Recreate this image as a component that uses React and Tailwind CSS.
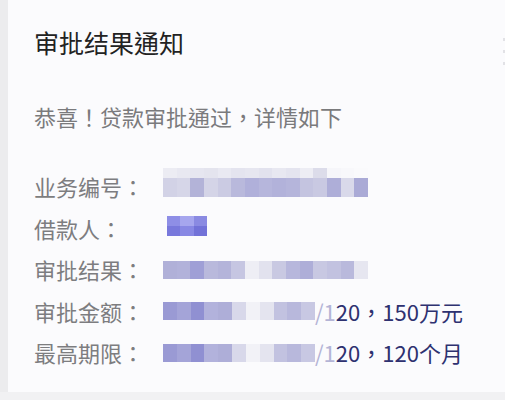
const font = { fontFamily: '"Noto Sans CJK TC", "Noto Sans", sans-serif' };

const rows = [
  { label: '业务编号：', kind: 'id' },
  { label: '借款人：', kind: 'name' },
  { label: '审批结果：', kind: 'result' },
  { label: '审批金额：', kind: 'amount', tail: '，150万元' },
  { label: '最高期限：', kind: 'amount', tail: '，120个月' },
];

const idTop = [
  'bg-[#ececf3]', 'bg-[#e8e8f1]', 'bg-[#e6e6f0]', 'bg-[#e4e4ee]', 'bg-[#e9e9f2]', 'bg-[#e4e4ef]',
  'bg-[#e6e6f0]', 'bg-[#e2e2ee]', 'bg-[#e8e8f1]', 'bg-[#e4e4ef]', 'bg-[#ededf4]', 'bg-[#dcdcea]',
  'bg-[#f6f6fa]', 'bg-[#f8f8fb]', 'bg-[#fafafc]',
];
const idBottom = [
  'bg-[#d2d2e6]', 'bg-[#d6d6e8]', 'bg-[#b3b3d8]', 'bg-[#d4d4e7]', 'bg-[#cbcbe3]', 'bg-[#b9b9dc]',
  'bg-[#b0b0da]', 'bg-[#b6b6dc]', 'bg-[#b2b2da]', 'bg-[#b5b5db]', 'bg-[#c4c4e0]', 'bg-[#c9c9e2]',
  'bg-[#aeaed8]', 'bg-[#d9d9ea]', 'bg-[#aaaad6]',
];
const nameCells = [
  ['bg-[#8e8ee6]', 'bg-[#a6a6ee]', 'bg-[#8a8ae2]'],
  ['bg-[#7878dc]', 'bg-[#8888e4]', 'bg-[#7272d8]'],
];
const resultCells = [
  'bg-[#b0b0d8]', 'bg-[#b2b2da]', 'bg-[#9f9fd6]', 'bg-[#b9b9dc]', 'bg-[#b4b4da]', 'bg-[#c6c6e2]',
  'bg-[#eeeef5]', 'bg-[#e2e2ee]', 'bg-[#c9c9e2]', 'bg-[#b7b7dc]', 'bg-[#aeaed8]', 'bg-[#c8c8e2]',
  'bg-[#c2c2e0]', 'bg-[#b9b9dc]', 'bg-[#e6e6f0]',
];
const amountCells = [
  'bg-[#9a9ad4]', 'bg-[#a4a4d8]', 'bg-[#9090d2]', 'bg-[#b2b2dc]', 'bg-[#aeaed8]', 'bg-[#d8d8ea]',
  'bg-[#f2f2f7]', 'bg-[#e4e4ef]', 'bg-[#c2c2e0]', 'bg-[#b8b8dc]', 'bg-[#c8c8e3]',
];

function Value({ kind, tail }) {
  if (kind === 'id') {
    return (
      <div className="flex flex-col w-[205px] mt-[2px] self-start">
        <div className="flex h-[10px]">
          {idTop.map((c, i) => <div key={i} className={`flex-1 ${c}`} />)}
        </div>
        <div className="flex h-[19px]">
          {idBottom.map((c, i) => <div key={i} className={`flex-1 ${c}`} />)}
        </div>
      </div>
    );
  }
  if (kind === 'name') {
    return (
      <div className="flex flex-col w-[40px] ml-[4px] mt-[8px] self-start">
        {nameCells.map((r, i) => (
          <div key={i} className="flex h-[10px]">
            {r.map((c, j) => <div key={j} className={`flex-1 ${c}`} />)}
          </div>
        ))}
      </div>
    );
  }
  if (kind === 'result') {
    return (
      <div className="flex w-[205px] h-[18px] mt-[1px]">
        {resultCells.map((c, i) => <div key={i} className={`flex-1 ${c}`} />)}
      </div>
    );
  }
  return (
    <div className="flex items-center">
      <div className="flex w-[152px] h-[18px]">
        {amountCells.map((c, i) => <div key={i} className={`flex-1 ${c}`} />)}
      </div>
      <span className="text-[22px] text-[#2e3170]">
        <span className="text-[#b4b4d6]">/1</span>20{tail}
      </span>
    </div>
  );
}

export default function App() {
  return (
    <div className="w-[505px] h-[400px] bg-[#ececee] flex flex-col overflow-hidden" style={font}>
      <div className="ml-[8px] h-[392px] bg-[#fbfbfd] flex flex-col">
        <div className="flex justify-between items-start mt-[24px]">
          <div className="pl-[26px] text-[25px] leading-[36px] text-[#222222]">审批结果通知</div>
          <div className="flex flex-col gap-[9px] mt-[14px]">
            <div className="w-[2px] h-[3px] bg-[#e2e2e6]" />
            <div className="w-[2px] h-[3px] bg-[#e2e2e6]" />
            <div className="w-[2px] h-[3px] bg-[#e2e2e6]" />
          </div>
        </div>
        <div className="pl-[26px] mt-[35px] text-[22px] leading-[32px] text-[#7a7a7c]">
          恭喜！贷款审批通过，详情如下
        </div>
        <div className="pl-[26px] mt-[34px] grid grid-cols-[129px_1fr]">
          {rows.map(r => (
            <div key={r.label} className="contents">
              <div className="text-[22px] leading-[41.5px] text-[#7d7d80]">{r.label}</div>
              <div className="flex items-center h-[41.5px]">
                <Value kind={r.kind} tail={r.tail} />
              </div>
            </div>
          ))}
        </div>
      </div>
      <div className="flex-1 bg-[#f1f1f3]" />
    </div>
  );
}
